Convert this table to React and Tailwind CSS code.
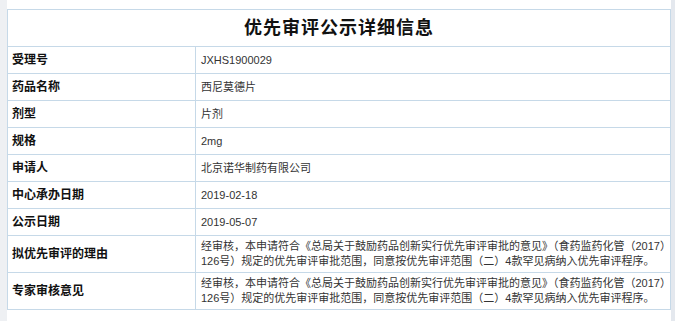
const rows = [
  { label: "受理号", value: "JXHS1900029" },
  { label: "药品名称", value: "西尼莫德片" },
  { label: "剂型", value: "片剂" },
  { label: "规格", value: "2mg" },
  { label: "申请人", value: "北京诺华制药有限公司" },
  { label: "中心承办日期", value: "2019-02-18" },
  { label: "公示日期", value: "2019-05-07" },
]

const reason = [
  "经审核，本申请符合《总局关于鼓励药品创新实行优先审评审批的意见》（食药监药化管（2017）",
  "126号）规定的优先审评审批范围，同意按优先审评范围（二）4款罕见病纳入优先审评程序。",
]

const longRows = ["拟优先审评的理由", "专家审核意见"]

const App = () => {
  return (
    <div
      className="w-[675px] h-[321px] bg-white flex overflow-hidden"
      style={{ fontFamily: '"Liberation Sans", "Noto Sans CJK SC", sans-serif' }}
    >
      <div className="w-[7px] bg-[#eef0f3]"></div>

      <div className="flex-1 pt-[9px]">
        <table className="w-full table-fixed border-collapse">
          <colgroup>
            <col className="w-[188px]" />
            <col />
          </colgroup>
          <tbody>
            <tr>
              <td colSpan={2} className="h-[37px] border border-[#c6d9e8] text-center text-[18px] font-bold text-[#111] tracking-[1px]">
                优先审评公示详细信息
              </td>
            </tr>

            {rows.map((r) => (
              <tr key={r.label}>
                <td className="h-[27px] border border-[#c6d9e8] pl-[4px] text-[12px] font-bold text-[#111]">
                  {r.label}
                </td>
                <td className="h-[27px] border border-[#c6d9e8] pl-[5px] text-[11px] text-[#333]">
                  {r.value}
                </td>
              </tr>
            ))}

            {longRows.map((label) => (
              <tr key={label}>
                <td className="h-[37px] border border-[#c6d9e8] pl-[4px] text-[12px] font-bold text-[#111]">
                  {label}
                </td>
                <td className="h-[37px] border border-[#c6d9e8] pl-[5px] text-[11px] leading-[15px] text-[#333]">
                  {reason.map((l, i) => (
                    <div key={i} className="whitespace-nowrap">{l}</div>
                  ))}
                </td>
              </tr>
            ))}
          </tbody>
        </table>
      </div>

      <div className="w-[4px] bg-[#e4e8ee]"></div>
    </div>
  )
}

export default App
